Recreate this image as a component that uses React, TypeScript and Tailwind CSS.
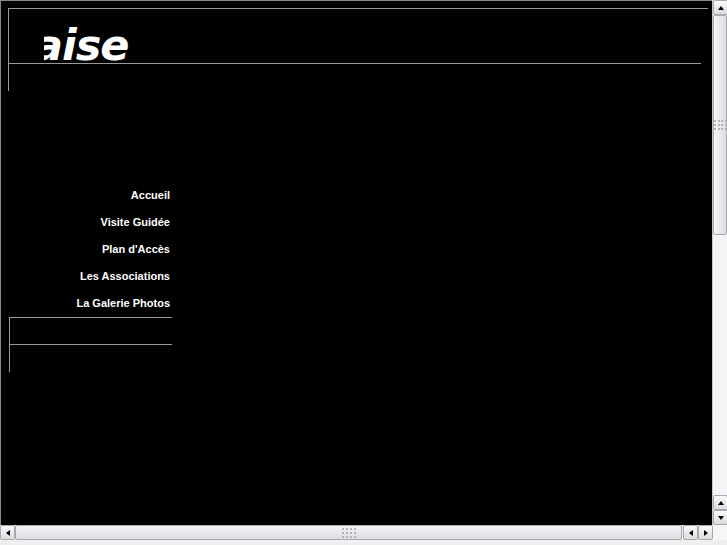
const navItems = ["Accueil", "Visite Guidée", "Plan d'Accès", "Les Associations", "La Galerie Photos"];

function Arrow({ dir }: { dir: "up" | "down" | "left" | "right" }) {
  const pts = {
    up: "1,6 4,2 7,6",
    down: "1,2 4,6 7,2",
    left: "6,1 2,4 6,7",
    right: "2,1 6,4 2,7",
  }[dir];
  return (
    <svg width="8" height="8" viewBox="0 0 8 8">
      <polygon points={pts} fill="#000" />
    </svg>
  );
}

function Btn({ dir, className = "" }: { dir: "up" | "down" | "left" | "right"; className?: string }) {
  return (
    <div className={"w-[15px] h-[15px] flex items-center justify-center border border-[#a8a8ae] rounded-[2px] bg-gradient-to-b from-[#fbfbfc] to-[#dcdce0] " + className}>
      <Arrow dir={dir} />
    </div>
  );
}

function Grip() {
  return (
    <div className="grid grid-cols-4 gap-[2px]">
      {Array.from({ length: 12 }).map((_, i) => (
        <div key={i} className="w-[2px] h-[2px] bg-[#b4b4bb]" />
      ))}
    </div>
  );
}

export default function App() {
  return (
    <div className="w-[727px] h-[545px] bg-[#efefef] flex flex-col overflow-hidden" style={{ fontFamily: '"Liberation Sans", Arial, sans-serif' }}>
      <div className="flex h-[525px]">
        <div className="w-[712px] h-full bg-black border-l border-t border-[#8a8a8a] overflow-hidden pl-[7px] pt-[7px]">
          <div className="w-[700px] h-[83px] border-t border-l border-[#9a9a9a]">
            <div className="h-[55px] mr-[7px] border-b border-[#9a9a9a] flex items-end overflow-hidden">
              <div className="ml-[35px] w-[200px] h-full overflow-hidden flex items-end">
                <span className="-ml-[10px] text-white font-bold italic text-[43px] leading-none -mb-[4px] tracking-[-1px]" style={{ fontFamily: '"DejaVu Sans", sans-serif' }}>
                  aise
                </span>
              </div>
            </div>
          </div>
          <div className="ml-[1px] mt-[91px] w-[163px]">
            {navItems.map((t) => (
              <div key={t} className="h-[27px] flex items-center justify-end pr-[2px] text-white font-bold text-[11px]">
                {t}
              </div>
            ))}
            <div className="h-[55px] border-t border-l border-[#9a9a9a]">
              <div className="h-[27px] border-b border-[#9a9a9a]" />
            </div>
          </div>
        </div>
        <div className="w-[15px] h-full flex flex-col bg-[#f4f4f6] border-l border-[#c8c8cc]">
          <Btn dir="up" />
          <div className="h-[220px] flex items-center justify-center border border-[#a8a8ae] rounded-[2px] bg-gradient-to-r from-[#f6f6f8] to-[#dcdce2]">
            <Grip />
          </div>
          <div className="flex-1" />
          <Btn dir="up" />
          <Btn dir="down" />
        </div>
      </div>
      <div className="flex h-[15px]">
        <Btn dir="left" />
        <div className="w-[667px] h-full flex items-center justify-center border border-[#a8a8ae] rounded-[2px] bg-gradient-to-b from-[#f6f6f8] to-[#dcdce2]">
          <Grip />
        </div>
        <div className="w-[1px]" />
        <Btn dir="left" />
        <Btn dir="right" />
        <div className="flex-1 bg-[#f6f6f6]" />
      </div>
      <div className="flex-1 bg-[#efefef]" />
    </div>
  );
}
